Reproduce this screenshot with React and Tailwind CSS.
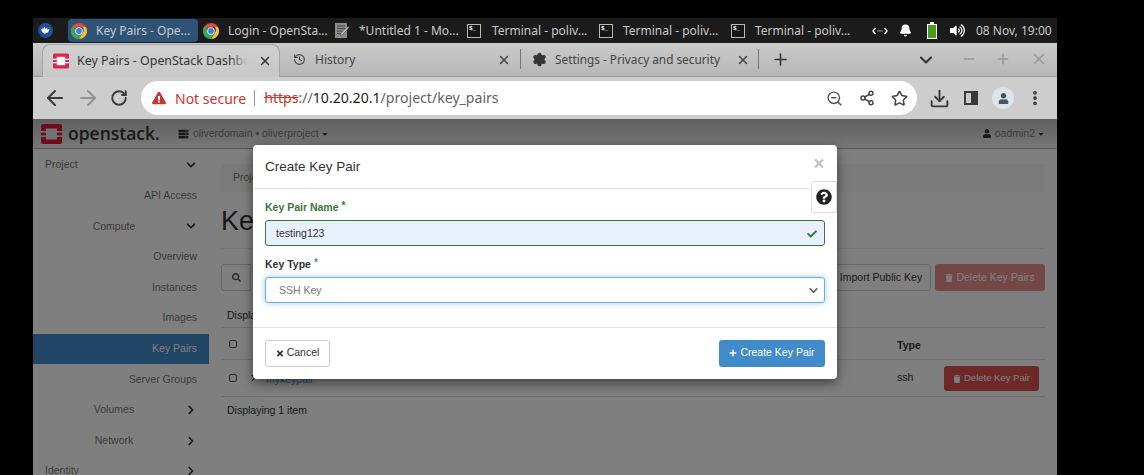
import { ArrowLeft, ArrowRight, RotateCw, ZoomOut, Share2, Star, Download, ChevronDown, Minus, Plus, X, History, Settings, Bell, MoreVertical } from "lucide-react";
import { FaTimes, FaPlus, FaTrash, FaQuestionCircle, FaSearch, FaCheck, FaUser, FaChevronDown, FaChevronRight, FaServer, FaCaretDown, FaExclamationTriangle, FaVolumeUp } from "react-icons/fa";

const chromeFont = "font-['Noto_Sans',sans-serif]";
const pageFont = "font-['Liberation_Sans',sans-serif]";

function ChromeIcon() {
  return (
    <svg viewBox="0 0 32 32" className="w-4 h-4 shrink-0">
      <path d="M16 0a16 16 0 0 1 13.9 8H16a8 8 0 0 0-7.6 5.6L3.6 5.5A16 16 0 0 1 16 0z" fill="#dd4b3e" />
      <path d="M29.9 8A16 16 0 0 1 16 32l6.9-12a8 8 0 0 0 0-12z" fill="#f5c02e" />
      <path d="M16 32A16 16 0 0 1 3.6 5.5l6.9 12a8 8 0 0 0 12.4 2.5L16 32z" fill="#3ba55c" />
      <circle cx="16" cy="16" r="7.5" fill="#fff" />
      <circle cx="16" cy="16" r="5.8" fill="#3f7fe0" />
    </svg>
  );
}

function TerminalIcon() {
  return (
    <div className="w-[14px] h-[14px] shrink-0 bg-[#161616] border border-[#b8b8b8] flex items-start pl-px">
      <span className="text-[6px] leading-[8px] font-bold text-white font-['Liberation_Mono',monospace]">$_</span>
    </div>
  );
}

function NotepadIcon() {
  return (
    <svg viewBox="0 0 14 15" className="w-[14px] h-[15px] shrink-0">
      <rect x="0" y="0" width="12" height="15" fill="#8c8c8c" />
      <path d="M2 3h8M2 5.5h8M2 8h5M2 10.5h4" stroke="#444" strokeWidth="1" />
      <path d="M13 3.5l1 1-6.5 7-2 1 .7-2.2z" fill="#d8d8d8" stroke="#333" strokeWidth=".5" />
    </svg>
  );
}

function OsLogo({ className, fill = "#e0254a", hole = "#fff" }) {
  return (
    <svg viewBox="0 0 21 20" className={className}>
      <rect width="21" height="20" rx="2" fill={fill} />
      <rect x="5" y="4.5" width="11" height="11" fill={hole} />
      <rect x="0" y="7" width="5" height="1.6" fill={hole} />
      <rect x="0" y="11.4" width="5" height="1.6" fill={hole} />
      <rect x="16" y="7" width="5" height="1.6" fill={hole} />
      <rect x="16" y="11.4" width="5" height="1.6" fill={hole} />
    </svg>
  );
}

function TaskItem({ icon, label, gap }) {
  return (
    <div className={`h-[23px] w-[132px] flex items-center shrink-0 pl-[3px] ${gap}`}>
      {icon}
      <span className="text-[12px] text-[#c9c9c9] whitespace-nowrap">{label}</span>
    </div>
  );
}

function TaskBar() {
  return (
    <div className={`h-[25px] bg-[#1b1b1b] flex items-center shrink-0 ${chromeFont}`}>
      <div className="w-[15px] h-[15px] ml-[5px] mr-[15px] rounded-full bg-[#1c4f9c] flex items-center justify-center shrink-0">
        <svg viewBox="0 0 12 12" className="w-[11px] h-[11px]">
          <path d="M1 4l1.5 1L3 2.5l1 2 1-3 1 3 2-2-.3 2.6L10.5 4 9 8 5 9.5 2.5 8z" fill="#fff" />
        </svg>
      </div>
      <div className="h-[23px] w-[130px] mr-[2px] flex items-center shrink-0 pl-[3px] gap-[9px] rounded-sm bg-[#2e5377]">
        <ChromeIcon />
        <span className="text-[12px] text-[#c9c9c9] whitespace-nowrap">Key Pairs - Ope...</span>
      </div>
      <TaskItem icon={<ChromeIcon />} label="Login - OpenSta..." gap="gap-[9px]" />
      <TaskItem icon={<NotepadIcon />} label="*Untitled 1 - Mo..." gap="gap-[10px]" />
      <TaskItem icon={<TerminalIcon />} label="Terminal - poliv..." gap="gap-[11px]" />
      <TaskItem icon={<TerminalIcon />} label="Terminal - poliv..." gap="gap-[10px]" />
      <TaskItem icon={<TerminalIcon />} label="Terminal - poliv..." gap="gap-[10px]" />
      <div className="ml-[12px] flex items-center shrink-0">
        <svg viewBox="0 0 16 8" className="w-4 h-2 shrink-0">
          <path d="M3.5 1L1 4l2.5 3M12.5 1L15 4l-2.5 3" fill="none" stroke="#fff" strokeWidth="1.3" />
          <path d="M5.5 4h1M7.5 4h1M9.5 4h1" stroke="#fff" strokeWidth="1" />
        </svg>
        <Bell className="w-[13px] h-[15px] ml-[11px] text-white fill-white" />
        <div className="ml-[15px] w-[10px] shrink-0 flex flex-col items-center">
          <div className="w-[4px] h-[2px] bg-white" />
          <div className="w-[10px] h-[15px] border border-white bg-[#4c9a1f]" />
        </div>
        <FaVolumeUp className="ml-[13px] w-[15px] h-[15px] text-white" />
        <span className="ml-[11px] text-[12px] text-[#c9c9c9] whitespace-nowrap">08 Nov, 19:00</span>
      </div>
    </div>
  );
}

function TabStrip() {
  return (
    <div className={`h-[34px] bg-[linear-gradient(#cbcbcb,#b6b6b6)] border-b border-[#9a9a9a] flex items-end shrink-0 ${chromeFont}`}>
      <div className="ml-[9px] w-[238px] h-[33px] bg-[linear-gradient(#cfcfcf,#c8c8c8)] border border-b-0 border-[#a5a5a5] rounded-t-lg flex items-center pl-[10px] shrink-0 translate-y-px">
        <OsLogo className="w-4 h-4 shrink-0" />
        <div className="ml-[8px] w-[171px] overflow-hidden relative shrink-0">
          <span className="text-[12.4px] text-[#333] whitespace-nowrap block">Key Pairs - OpenStack Dashbo</span>
          <div className="absolute right-0 top-0 bottom-0 w-[18px] bg-[linear-gradient(90deg,transparent,#cbcbcb)]" />
        </div>
        <X className="w-[14px] h-[14px] ml-[10px] text-[#333] shrink-0" strokeWidth={2.5} />
      </div>
      <div className="w-[240px] h-[33px] flex items-center pl-[13px] pr-[9px] shrink-0">
        <History className="w-[13px] h-[13px] text-[#444] shrink-0" />
        <span className="ml-[9px] text-[12px] text-[#444]">History</span>
        <X className="w-[14px] h-[14px] ml-auto text-[#444] shrink-0" strokeWidth={2.5} />
      </div>
      <div className="w-px h-[20px] mb-[7px] bg-[#777] shrink-0" />
      <div className="w-[237px] h-[33px] flex items-center pl-[11px] pr-[8px] shrink-0">
        <Settings className="w-[15px] h-[15px] text-[#333] fill-[#333] shrink-0" />
        <span className="ml-[8px] text-[11.8px] text-[#444] whitespace-nowrap">Settings - Privacy and security</span>
        <X className="w-[14px] h-[14px] ml-auto text-[#444] shrink-0" strokeWidth={2.5} />
      </div>
      <div className="w-px h-[20px] mb-[7px] bg-[#777] shrink-0" />
      <Plus className="w-[19px] h-[19px] ml-[12px] mb-[7px] text-[#333] shrink-0" strokeWidth={2} />
      <ChevronDown className="w-[20px] h-[20px] ml-[126px] mb-[6px] text-[#333] shrink-0" strokeWidth={2.5} />
      <Minus className="w-4 h-4 ml-[25px] mb-[9px] text-[#999] shrink-0" strokeWidth={2.5} />
      <Plus className="w-4 h-4 ml-[18px] mb-[9px] text-[#999] shrink-0" strokeWidth={2.5} />
      <X className="w-[18px] h-[18px] ml-[19px] mb-[8px] text-[#999] shrink-0" strokeWidth={2.2} />
    </div>
  );
}

function ToolBar() {
  return (
    <div className={`h-[42px] bg-[#cdcdcd] flex items-center shrink-0 ${chromeFont}`}>
      <ArrowLeft className="w-6 h-6 ml-[10px] text-[#3a3a3a] shrink-0" strokeWidth={2} />
      <ArrowRight className="w-6 h-6 ml-[8.5px] text-[#929292] shrink-0" strokeWidth={2} />
      <RotateCw className="w-[18px] h-[18px] ml-[10.5px] text-[#3a3a3a] shrink-0" strokeWidth={2.5} />
      <div className="ml-[13px] w-[776px] h-[34px] bg-white rounded-full flex items-center pl-[11px] pr-[9px] shrink-0">
        <FaExclamationTriangle className="w-[14px] h-[14px] text-[#c5392b] shrink-0" />
        <span className="ml-[9px] text-[14px] text-[#c5392b] whitespace-nowrap">Not secure</span>
        <div className="ml-[8px] w-px h-[16px] bg-[#999] shrink-0" />
        <span className="ml-[9px] text-[14.1px] text-[#c5392b] line-through">https</span>
        <span className="text-[14.1px] text-[#5f6368]">://</span>
        <span className="text-[14.1px] text-[#222]">10.20.20.1</span>
        <span className="text-[14.1px] text-[#5f6368]">/project/key_pairs</span>
        <ZoomOut className="w-[17px] h-[17px] ml-auto text-[#555] shrink-0" />
        <Share2 className="w-4 h-4 ml-[16px] text-[#444] shrink-0" strokeWidth={2.2} />
        <Star className="w-[17px] h-[17px] ml-[16px] text-[#444] shrink-0" strokeWidth={2.2} />
      </div>
      <Download className="w-[21px] h-[21px] ml-[11.5px] text-[#3a3a3a] shrink-0" strokeWidth={2.2} />
      <div className="ml-[14.5px] w-[14px] h-[14px] border-2 border-[#3a3a3a] flex justify-end shrink-0">
        <div className="w-[5px] h-full bg-[#3a3a3a]" />
      </div>
      <div className="ml-[14px] w-[22px] h-[22px] rounded-full bg-[#dde3ea] flex items-center justify-center shrink-0">
        <FaUser className="w-[11px] h-[11px] text-[#4a5560]" />
      </div>
      <MoreVertical className="w-[18px] h-[18px] ml-[12px] text-[#3a3a3a] shrink-0" strokeWidth={3} />
    </div>
  );
}

function SideItem({ label, level, active, chevron }) {
  const Chevron = chevron === "down" ? FaChevronDown : FaChevronRight;
  if (level === 0) {
    return (
      <div className="h-[30.6px] flex items-center pl-[12px] pr-[13px] text-[#777]">
        <span>{label}</span>
        <Chevron className="ml-auto w-[10px] h-[10px] text-[#333]" />
      </div>
    );
  }
  if (level === 1) {
    return (
      <div className="h-[30.6px] flex items-center pl-[47px] pr-[13px] text-[#777]">
        <span className="w-[68px] text-center">{label}</span>
        <Chevron className="ml-auto w-[10px] h-[10px] text-[#333]" />
      </div>
    );
  }
  return (
    <div className={`h-[30.6px] flex items-center justify-end pr-[12px] ${active ? "bg-[#428bca] text-white" : "text-[#777]"}`}>
      {label}
    </div>
  );
}

function Sidebar() {
  return (
    <div className="w-[176px] shrink-0 pt-px text-[10.5px]">
      <SideItem label="Project" level={0} chevron="down" />
      <SideItem label="API Access" level={2} />
      <SideItem label="Compute" level={1} chevron="down" />
      <SideItem label="Overview" level={2} />
      <SideItem label="Instances" level={2} />
      <SideItem label="Images" level={2} />
      <SideItem label="Key Pairs" level={2} active />
      <SideItem label="Server Groups" level={2} />
      <SideItem label="Volumes" level={1} chevron="right" />
      <SideItem label="Network" level={1} chevron="right" />
      <SideItem label="Identity" level={0} chevron="right" />
    </div>
  );
}

function Checkbox() {
  return <div className="w-[8px] h-[8px] border border-[#555] rounded-[2px] bg-white shrink-0" />;
}

function MainArea() {
  return (
    <div className="flex-1 min-w-0 px-[12px] pt-[15px] text-[10.5px] text-[#333]">
      <div className="h-[28px] bg-[#f5f5f5] rounded-[3px] flex items-center pl-[12px] text-[#777]">Project</div>
      <div className="h-[57px] border-b border-[#eee] flex items-end pb-[12px]">
        <h1 className="text-[27px] leading-[30px] font-medium text-[#333]">Key Pairs</h1>
      </div>
      <div className="mt-[15px] h-[27px] flex items-stretch">
        <div className="w-[30px] border border-[#ccc] rounded-l-[3px] flex items-center justify-center">
          <FaSearch className="w-[9px] h-[9px] text-[#555]" />
        </div>
        <div className="ml-auto flex gap-[4px]">
          <div className="w-[100px] border border-[#ccc] rounded-[3px] flex items-center justify-center whitespace-nowrap">Import Public Key</div>
          <div className="w-[110px] bg-[#d9534f]/65 rounded-[3px] flex items-center justify-center gap-[3px] text-white">
            <FaTrash className="w-[8px] h-[8px]" />
            Delete Key Pairs
          </div>
        </div>
      </div>
      <div className="mt-[18px] pl-[6px] pt-px h-[12px] flex items-center text-[#333]">Displaying 1 item</div>
      <div className="mt-[6px] h-[33px] border-t border-b border-[#ddd] flex items-center pl-[8px] relative">
        <Checkbox />
        <span className="absolute left-[676px] top-[10px] font-bold">Type</span>
      </div>
      <div className="h-[37px] border-b border-[#ddd] flex items-center pl-[8px] relative">
        <Checkbox />
        <FaChevronRight className="ml-[13px] w-[7px] h-[8px] text-[#222]" />
        <span className="ml-[9px] mt-[3px] text-[#428bca]">mykeypair</span>
        <span className="absolute left-[676px]">ssh</span>
        <div className="absolute left-[723px] top-[6px] w-[95px] h-[25px] bg-[#d9534f] rounded-[3px] flex items-center justify-center gap-[3px] text-white text-[9.5px]">
          <FaTrash className="w-[8px] h-[8px]" />
          Delete Key Pair
        </div>
      </div>
      <div className="mt-[7px] pl-[6px] pt-px h-[12px] flex items-center">Displaying 1 item</div>
    </div>
  );
}

function Dashboard() {
  return (
    <div className={`flex-1 min-h-0 bg-white flex flex-col overflow-hidden ${pageFont}`}>
      <div className="h-[30px] shrink-0 bg-[linear-gradient(#c0c0c0,#f0f0f0)] border-b border-[#aaa] flex items-center text-[10.5px] text-[#777]">
        <OsLogo className="ml-[8px] w-[21px] h-[20px] shrink-0" fill="#da1a32" hole="#e4e4e4" />
        <span className="ml-[6px] w-[89px] whitespace-nowrap text-[17.5px] leading-none text-[#333] font-['Open_Sans',sans-serif] font-semibold">openstack.</span>
        <FaServer className="ml-[21px] w-[11px] h-[10px] text-[#333]" />
        <span className="ml-[4px]">oliverdomain • oliverproject</span>
        <FaCaretDown className="ml-[2px] w-[8px] h-[8px] text-[#333]" />
        <FaUser className="ml-auto w-[8px] h-[9px] text-[#333]" />
        <span className="ml-[4px]">oadmin2</span>
        <FaCaretDown className="ml-[2px] mr-[12px] w-[8px] h-[8px] text-[#333]" />
      </div>
      <div className="flex flex-1 min-h-0">
        <Sidebar />
        <MainArea />
      </div>
    </div>
  );
}

function Modal() {
  return (
    <div className={`absolute left-[220px] top-[26px] w-[584px] h-[234px] bg-white rounded-[4px] shadow-[0_4px_12px_rgba(0,0,0,0.5)] flex flex-col text-[#333] ${pageFont}`}>
      <div className="h-[44px] shrink-0 border-b border-[#e5e5e5] flex items-center pl-[12px] pr-[12px]">
        <span className="pt-px text-[13.5px] text-[#333]">Create Key Pair</span>
        <FaTimes className="ml-auto -mt-[7px] w-[12px] h-[13px] text-[#c4c4c4]" />
      </div>
      <div className="flex-1 px-[12px] pt-[11px] relative">
        <div className="absolute right-0 top-[-8px] w-[26px] h-[32px] border border-[#ddd] rounded-l-[3px] bg-white flex items-center justify-center">
          <FaQuestionCircle className="w-[16px] h-[16px] text-[#222]" />
        </div>
        <div className="h-[14px] pt-px flex items-center text-[10.5px] font-bold text-[#3c763d]">
          Key Pair Name<span className="ml-[3px] -mt-[5px] text-[10px]">*</span>
        </div>
        <div className="mt-[6px] h-[26px] pt-px rounded-[3px] border border-[#3c763d] bg-[#e8f0fe] flex items-center pl-[10px] pr-[7px] text-[10.5px] text-[#333]">
          testing123
          <FaCheck className="ml-auto w-[10px] h-[10px] text-[#3c763d]" />
        </div>
        <div className="mt-[11px] h-[14px] pt-px flex items-center text-[10.5px] font-bold">
          Key Type<span className="ml-[3px] -mt-[5px] text-[10px] text-[#428bca]">*</span>
        </div>
        <div className="mt-[6px] h-[26px] pt-px rounded-[3px] border border-[#66afe9] shadow-[0_0_6px_rgba(102,175,233,0.6)] bg-white flex items-center pl-[13px] pr-[4px] text-[10.5px] text-[#777]">
          SSH Key
          <ChevronDown className="ml-auto w-[13px] h-[13px] text-[#666]" strokeWidth={3} />
        </div>
      </div>
      <div className="h-[52px] shrink-0 border-t border-[#e5e5e5] flex items-center justify-between px-[12px]">
        <div className="w-[65px] h-[27px] pb-px border border-[#ccc] rounded-[3px] flex items-center justify-center gap-[3px] text-[10.5px] text-[#333]">
          <FaTimes className="w-[8px] h-[9px]" />
          Cancel
        </div>
        <div className="w-[106px] h-[27px] pb-px bg-[#428bca] rounded-[3px] flex items-center justify-center gap-[3px] text-[10.5px] text-white">
          <FaPlus className="w-[8px] h-[8px]" />
          Create Key Pair
        </div>
      </div>
    </div>
  );
}

export default function App() {
  return (
    <div className="w-[1144px] h-[475px] bg-black overflow-hidden pl-[33px] pr-[87px] pt-[18px]">
      <div className="w-[1024px] h-[457px] flex flex-col">
        <TaskBar />
        <TabStrip />
        <ToolBar />
        <div className="flex-1 min-h-0 flex relative">
          <Dashboard />
          <div className="absolute inset-0 bg-black/50" />
          <Modal />
        </div>
      </div>
    </div>
  );
}
